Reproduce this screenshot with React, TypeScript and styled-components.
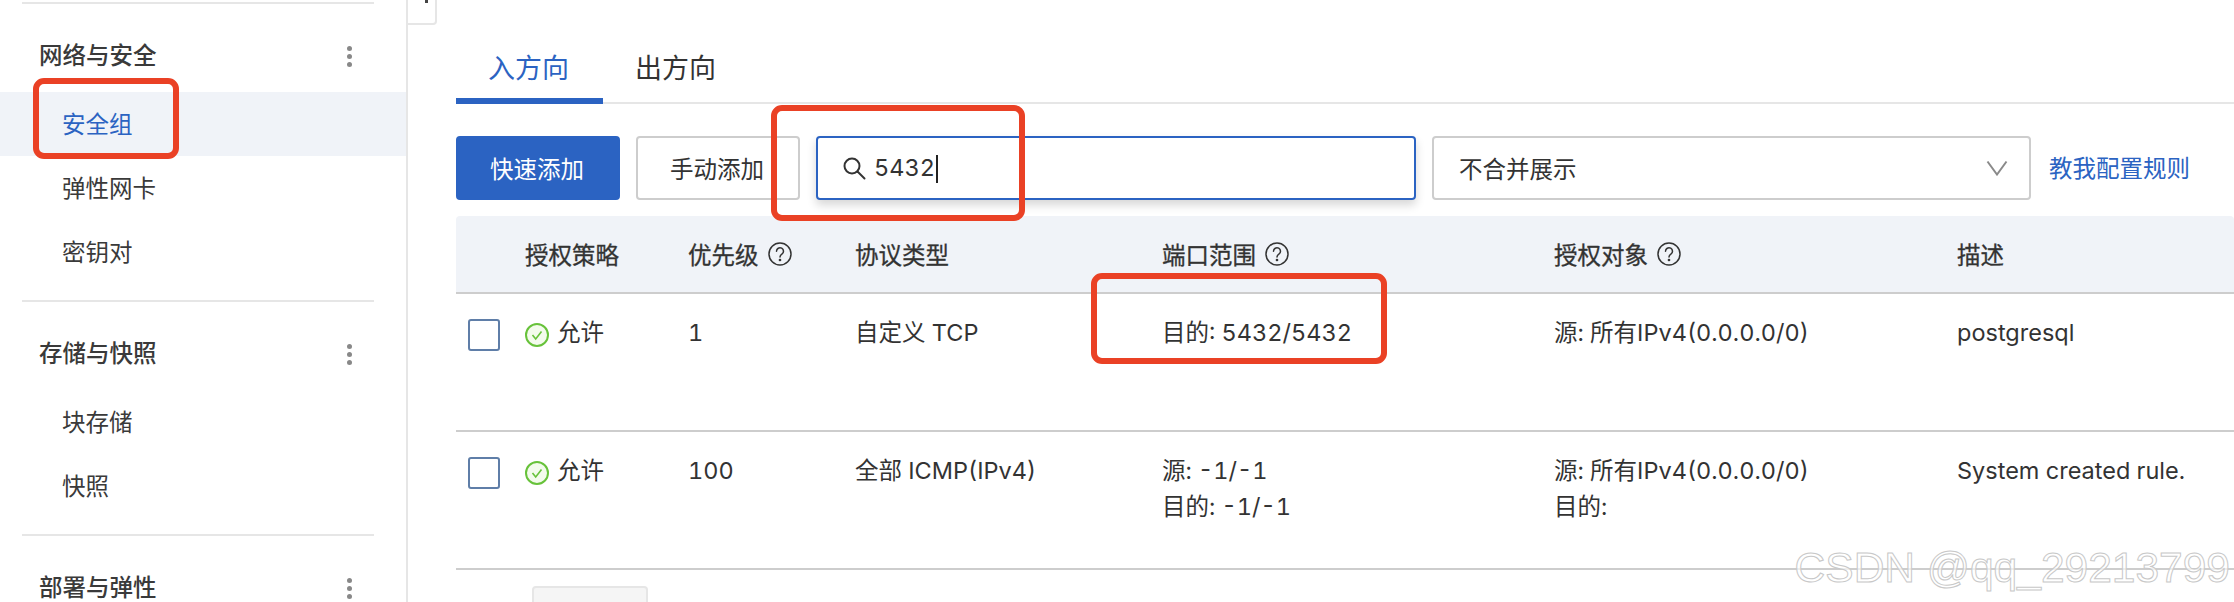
import React from "react";
import styled, { createGlobalStyle } from "styled-components";

const GlobalStyle = createGlobalStyle`
  html, body {
    margin: 0;
    padding: 0;
    background: #fff;
  }
  body {
    font-family: "Inter", "Noto Sans CJK SC", sans-serif;
    font-size: 23.5px;
    font-feature-settings: "tnum";
    color: #333;
  }
`;

const BLUE = "#2b63c2";
const LINE = "#cdcdcd";

const Page = styled.div`
  position: relative;
  display: flex;
  width: 2234px;
  height: 602px;
  overflow: hidden;
`;

const Sidebar = styled.aside`
  flex: none;
  box-sizing: border-box;
  width: 408px;
  padding-top: 2px;
  border-right: 2px solid #e6e6e6;
`;

const Divider = styled.div`
  height: 2px;
  margin: 0 32px 0 22px;
  background: #e6e6e6;
`;

const NavGroup = styled.section`
  padding-bottom: 16px;
`;

const NavHeader = styled.div`
  display: flex;
  align-items: center;
  justify-content: space-between;
  height: 44px;
  padding: 30px 54px 14px 39px;
  font-weight: 500;
  line-height: 24px;
  color: #3a3a3a;
`;

const Kebab = styled.span`
  display: flex;
  flex-direction: column;
  gap: 3px;

  i {
    display: block;
    width: 5px;
    height: 5px;
    border-radius: 50%;
    background: #888;
  }
`;

const NavItem = styled.div<{ $active?: boolean }>`
  height: 64px;
  padding-left: 62px;
  line-height: 65px;
  color: ${({ $active }) => ($active ? BLUE : "#3a3a3a")};
  background: ${({ $active }) => ($active ? "#f0f3f8" : "transparent")};
`;

const CollapseToggle = styled.div`
  position: absolute;
  top: -8px;
  left: 406px;
  width: 31px;
  height: 33px;
  box-sizing: border-box;
  border: 2px solid #e6e6e6;
  border-radius: 0 0 4px 0;
  background: #fff;

  &::after {
    content: "";
    position: absolute;
    top: 6px;
    left: 17px;
    width: 3px;
    height: 3px;
    background: #444;
  }
`;

const Main = styled.main`
  flex: 1;
  min-width: 0;
  padding-left: 48px;
`;

const Tabs = styled.div`
  display: flex;
  height: 102px;
  border-bottom: 2px solid #e6e6e6;
`;

const Tab = styled.div<{ $active?: boolean }>`
  box-sizing: border-box;
  height: 104px;
  padding: 49px 34px 0 32px;
  font-size: 27px;
  line-height: 40px;
  color: ${({ $active }) => ($active ? BLUE : "#333")};
  border-bottom: 6px solid ${({ $active }) => ($active ? BLUE : "transparent")};
`;

const Toolbar = styled.div`
  display: flex;
  align-items: stretch;
  height: 64px;
  margin-top: 32px;
  gap: 16px;
`;

const Button = styled.div<{ $primary?: boolean }>`
  display: flex;
  align-items: center;
  justify-content: center;
  box-sizing: border-box;
  width: 164px;
  padding-right: 2px;
  border-radius: 4px;
  border: 2px solid ${({ $primary }) => ($primary ? BLUE : LINE)};
  background: ${({ $primary }) => ($primary ? BLUE : "#fff")};
  color: ${({ $primary }) => ($primary ? "#fff" : "#333")};
`;

const SearchBox = styled.div`
  display: flex;
  align-items: center;
  box-sizing: border-box;
  width: 600px;
  padding-left: 24px;
  gap: 8px;
  border: 2px solid ${BLUE};
  border-radius: 4px;
  box-shadow: 0 5px 10px rgba(0, 0, 0, 0.16);
`;

const Caret = styled.span`
  display: inline-block;
  width: 2px;
  height: 28px;
  margin-left: 1px;
  vertical-align: middle;
  background: #222;
`;

const Select = styled.div`
  display: flex;
  align-items: center;
  justify-content: space-between;
  box-sizing: border-box;
  width: 599px;
  padding: 0 21px 0 25px;
  border: 2px solid ${LINE};
  border-radius: 4px;
`;

const HelpLink = styled.div`
  margin-left: 2px;
  line-height: 65px;
  color: ${BLUE};
`;

const COLUMNS = "69px 163px 167px 307px 392px 403px 1fr";

const HeaderRow = styled.div`
  display: grid;
  grid-template-columns: ${COLUMNS};
  align-items: center;
  height: 76px;
  margin-top: 16px;
  border-bottom: 2px solid ${LINE};
  border-radius: 4px 4px 0 0;
  background: #f0f3f8;
`;

const HeaderCell = styled.div`
  display: flex;
  align-items: center;
  gap: 9px;
  -webkit-text-stroke: 0.3px #333;
`;

const Row = styled.div`
  display: grid;
  grid-template-columns: ${COLUMNS};
  height: 136px;
  border-bottom: 2px solid ${LINE};
`;

const Cell = styled.div`
  padding-top: 21px;
  line-height: 36px;
`;

const CheckboxCell = styled.div`
  padding: 25px 0 0 12px;
`;

const Checkbox = styled.span`
  display: block;
  box-sizing: border-box;
  width: 32px;
  height: 32px;
  border: 2px solid #5f7ea8;
  border-radius: 3px;
`;

const Status = styled.div`
  display: flex;
  align-items: flex-start;
  gap: 8px;

  svg {
    flex: none;
    margin-top: 8px;
  }
`;

const Pager = styled.div`
  box-sizing: border-box;
  width: 116px;
  height: 50px;
  margin: 16px 0 0 76px;
  border: 2px solid #e6e6e6;
  border-radius: 4px;
  background: #f5f5f5;
`;

const Callout = styled.div<{ $x: number; $y: number; $w: number; $h: number }>`
  position: absolute;
  left: ${({ $x }) => $x}px;
  top: ${({ $y }) => $y}px;
  width: ${({ $w }) => $w}px;
  height: ${({ $h }) => $h}px;
  box-sizing: border-box;
  border: 6px solid #ea4125;
  border-radius: 11px;
`;

const Watermark = styled.div`
  position: absolute;
  right: 4px;
  top: 544px;
  font-family: "Liberation Sans", sans-serif;
  font-size: 42.5px;
  line-height: 48px;
  font-feature-settings: normal;
  white-space: nowrap;
  color: rgba(255, 255, 255, 0.7);
  -webkit-text-stroke: 1px #c8c8c8;
`;

function HelpIcon() {
  return (
    <svg width="24" height="24" viewBox="0 0 24 24" fill="none" stroke="#333" strokeWidth="1.5">
      <circle cx="12" cy="12" r="11" />
      <path d="M8.5 9.2a3.5 3.5 0 1 1 5.4 3c-1.2.8-1.9 1.4-1.9 2.8" strokeLinecap="round" />
      <circle cx="12" cy="18" r="0.6" fill="#333" />
    </svg>
  );
}

function AllowIcon() {
  return (
    <svg width="24" height="24" viewBox="0 0 24 24" fill="#f3fbec" stroke="#67c23a" strokeWidth="2">
      <circle cx="12" cy="12" r="11" />
      <path d="M7.5 12l3.2 4 5.8-7.5" fill="none" strokeWidth="1.6" />
    </svg>
  );
}

function SearchIcon() {
  return (
    <svg width="24" height="24" viewBox="0 0 24 24" fill="none" stroke="#333" strokeWidth="2">
      <circle cx="10" cy="10" r="7.5" />
      <path d="M15.5 15.5l7 7" strokeLinecap="round" />
    </svg>
  );
}

function ChevronIcon() {
  return (
    <svg width="22" height="16" viewBox="0 0 22 16" fill="none" stroke="#8a8a8a" strokeWidth="2">
      <path d="M1.5 1.5L11 14.5 20.5 1.5" />
    </svg>
  );
}

const navGroups = [
  { title: "网络与安全", items: ["安全组", "弹性网卡", "密钥对"] },
  { title: "存储与快照", items: ["块存储", "快照"] },
  { title: "部署与弹性", items: [] as string[] },
];

const columns = [
  { label: "授权策略" },
  { label: "优先级", help: true },
  { label: "协议类型" },
  { label: "端口范围", help: true },
  { label: "授权对象", help: true },
  { label: "描述" },
];

const rules = [
  {
    priority: "1",
    protocol: "自定义 TCP",
    port: ["目的: 5432/5432"],
    target: ["源: 所有IPv4(0.0.0.0/0)"],
    desc: "postgresql",
  },
  {
    priority: "100",
    protocol: "全部 ICMP(IPv4)",
    port: ["源: -1/-1", "目的: -1/-1"],
    target: ["源: 所有IPv4(0.0.0.0/0)", "目的:"],
    desc: "System created rule.",
  },
];

export default function App() {
  return (
    <Page>
      <GlobalStyle />
      <Sidebar>
        {navGroups.map((group) => (
          <React.Fragment key={group.title}>
            <Divider />
            <NavGroup>
              <NavHeader>
                {group.title}
                <Kebab>
                  <i />
                  <i />
                  <i />
                </Kebab>
              </NavHeader>
              {group.items.map((item) => (
                <NavItem key={item} $active={item === "安全组"}>
                  {item}
                </NavItem>
              ))}
            </NavGroup>
          </React.Fragment>
        ))}
      </Sidebar>
      <CollapseToggle />
      <Main>
        <Tabs>
          <Tab $active>入方向</Tab>
          <Tab>出方向</Tab>
        </Tabs>
        <Toolbar>
          <Button $primary>快速添加</Button>
          <Button>手动添加</Button>
          <SearchBox>
            <SearchIcon />
            <span>
              5432
              <Caret />
            </span>
          </SearchBox>
          <Select>
            不合并展示
            <ChevronIcon />
          </Select>
          <HelpLink>教我配置规则</HelpLink>
        </Toolbar>
        <HeaderRow>
          <span />
          {columns.map((col) => (
            <HeaderCell key={col.label}>
              {col.label}
              {col.help && <HelpIcon />}
            </HeaderCell>
          ))}
        </HeaderRow>
        {rules.map((rule) => (
          <Row key={rule.priority}>
            <CheckboxCell>
              <Checkbox />
            </CheckboxCell>
            <Cell>
              <Status>
                <AllowIcon />
                允许
              </Status>
            </Cell>
            <Cell>{rule.priority}</Cell>
            <Cell>{rule.protocol}</Cell>
            <Cell>
              {rule.port.map((line) => (
                <div key={line}>{line}</div>
              ))}
            </Cell>
            <Cell>
              {rule.target.map((line) => (
                <div key={line}>{line}</div>
              ))}
            </Cell>
            <Cell>{rule.desc}</Cell>
          </Row>
        ))}
        <Pager />
      </Main>
      <Callout $x={33} $y={78} $w={146} $h={81} />
      <Callout $x={771} $y={105} $w={254} $h={116} />
      <Callout $x={1091} $y={273} $w={296} $h={91} />
      <Watermark>CSDN @qq_29213799</Watermark>
    </Page>
  );
}
